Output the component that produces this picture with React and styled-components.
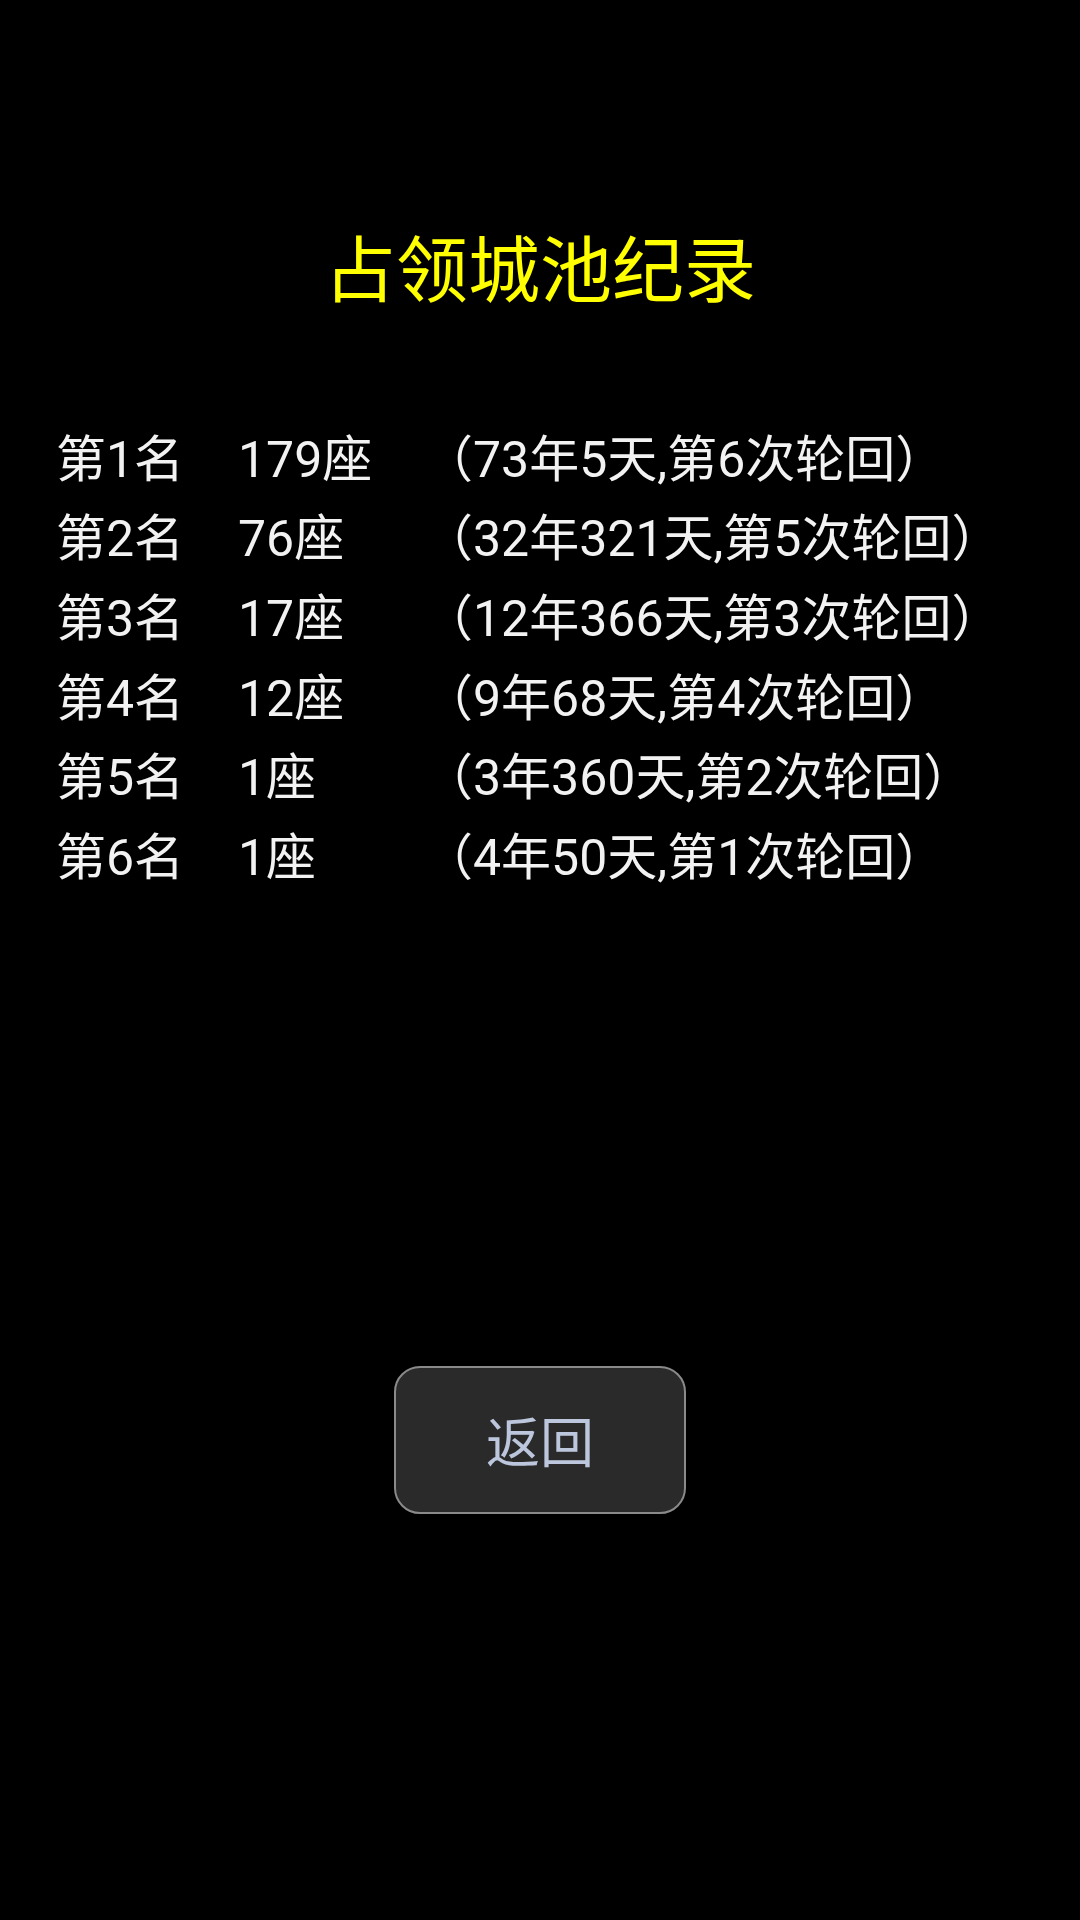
import React from 'react';
import styled, { createGlobalStyle } from 'styled-components';

const GlobalStyle = createGlobalStyle`
  html, body {
    margin: 0;
    padding: 0;
    background: #000;
  }
  body {
    font-family: Roboto, "Noto Sans CJK SC", sans-serif;
  }
`;

const Screen = styled.div`
  width: 1080px;
  height: 1920px;
  background: #000;
  display: flex;
  flex-direction: column;
  align-items: stretch;
`;

const Title = styled.h1`
  margin: 236px 0 0;
  font-size: 72px;
  line-height: 72px;
  font-weight: 400;
  color: #ffff00;
  text-align: center;
`;

const Records = styled.div`
  margin-top: 107px;
  padding-left: 56px;
  display: grid;
  grid-template-columns: 182px 185px auto;
  grid-auto-rows: 79.6px;
  align-items: center;
  font-size: 50px;
  color: #f2f2f2;
`;

const Cell = styled.span`
  white-space: nowrap;
`;

const Footer = styled.div`
  margin-top: 473px;
  display: flex;
  justify-content: center;
`;

const BackButton = styled.button`
  width: 292px;
  height: 148px;
  border: 2px solid #8a8a8a;
  border-radius: 26px;
  background: #2a2a2a;
  color: #bcc6dc;
  font-family: "Noto Sans CJK SC", sans-serif;
  font-size: 54px;
  cursor: pointer;
`;

const records = [
  ['第1名', '179座', '（73年5天,第6次轮回）'],
  ['第2名', '76座', '（32年321天,第5次轮回）'],
  ['第3名', '17座', '（12年366天,第3次轮回）'],
  ['第4名', '12座', '（9年68天,第4次轮回）'],
  ['第5名', '1座', '（3年360天,第2次轮回）'],
  ['第6名', '1座', '（4年50天,第1次轮回）'],
];

const App = () => {
  return (
    <>
      <GlobalStyle />
      <Screen>
        <Title>占领城池纪录</Title>
        <Records>
          {records.map((r) => (
            <React.Fragment key={r[0]}>
              <Cell>{r[0]}</Cell>
              <Cell>{r[1]}</Cell>
              <Cell>{r[2]}</Cell>
            </React.Fragment>
          ))}
        </Records>
        <Footer>
          <BackButton>返回</BackButton>
        </Footer>
      </Screen>
    </>
  );
};

export default App;
